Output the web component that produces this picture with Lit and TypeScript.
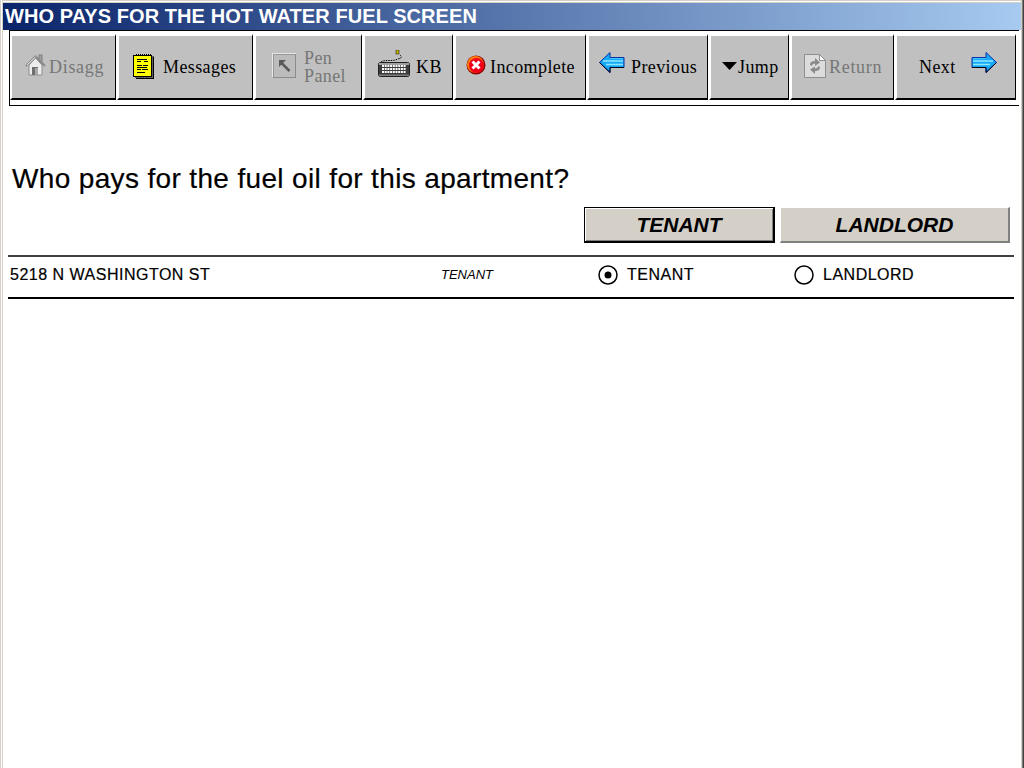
import { LitElement, html, css, svg } from "lit";
import { customElement } from "lit/decorators.js";

const home = svg`<svg class="ic i-home" width="21" height="22" viewBox="0 0 21 22">
  <rect x="14" y="1" width="3" height="7" fill="#a0a0a0" stroke="#808080" stroke-width="1"/>
  <path d="M4 11V21H17V11L10.500 4Z" fill="#ececec" stroke="#8c8c8c"/>
  <path d="M1 12L10.500 2.500L20 12" fill="none" stroke="#8a8a8a" stroke-width="2"/>
  <path d="M2 11L10.500 3" fill="none" stroke="#e8e8e8"/>
  <rect x="7" y="13" width="6" height="8" fill="#6e6e6e"/><rect x="10" y="14" width="3" height="7" fill="#a8a8a8"/>
</svg>`;

const notepad = svg`<svg class="ic i-note" width="22" height="26" viewBox="0 0 22 26" shape-rendering="crispEdges">
  <rect x="2" y="3" width="19" height="22" fill="#606060"/>
  <rect x="0.500" y="2.500" width="18" height="21" fill="#ffff00" stroke="#000"/>
  <path d="M20.500 4V25H3" fill="none" stroke="#000"/>
  <path d="M3 1V3M5 1V3M7 1V3M9 1V3M11 1V3M13 1V3M15 1V3M17 1V3" stroke="#000"/>
  <path d="M4 6.500H14M4 8.500H8M11 8.500H15M4 12.500H9M10 12.500H15M4 14.500H14M4 16.500H8M9 16.500H15M4 19.500H12" stroke="#000"/>
</svg>`;

const penBox = svg`<svg class="ic i-pen" width="24" height="25" viewBox="0 0 24 25" shape-rendering="crispEdges">
  <rect width="24" height="25" fill="#bcbcbc"/>
  <path d="M0.500 24V0.500H23.500" fill="none" stroke="#e6e6e6"/>
  <path d="M1.500 24V1.500H23" fill="none" stroke="#989898"/>
  <path d="M23.500 1V24.500H1" fill="none" stroke="#8c8c8c"/>
  <path d="M17.500 18L9 9.500" stroke="#5a5a5a" stroke-width="2.500" fill="none" shape-rendering="auto"/>
  <path d="M7 7H14L7 14Z" fill="#5a5a5a" shape-rendering="auto"/>
</svg>`;

const keys = [0, 1, 2].flatMap((r) =>
  [0, 1, 2, 3, 4, 5, 6, 7, 8].map(
    (c) => svg`<rect x=${4 + c * 2.700} y=${15 + r * 3} width="2" height="2" fill="#fff"/>`
  )
);
const keyboard = svg`<svg class="ic i-kb" width="32" height="28" viewBox="0 0 32 28">
  <path d="M3 12C8 9 14 12 20 9C24 8 25 6 21 5" fill="none" stroke="#000" stroke-dasharray="1.500 1"/>
  <rect x="18" y="0" width="3" height="4" fill="#c8b400" stroke="#000" stroke-width="0.500"/>
  <rect x="0.500" y="12.500" width="31" height="14" rx="2" fill="#3c3c3c" stroke="#202020"/>
  <rect x="1" y="13" width="30" height="2" fill="#a0a0a0"/>
  <rect x="1" y="24.500" width="30" height="1.500" fill="#7c7c7c"/>
  ${keys}
</svg>`;

const stop = svg`<svg class="ic i-stop" width="20" height="20" viewBox="0 0 20 20">
  <circle cx="10" cy="10" r="9.500" fill="#8c0000"/>
  <circle cx="9.500" cy="9.500" r="8.500" fill="#ff7a10"/>
  <circle cx="10.500" cy="10.500" r="7.500" fill="#f00018"/>
  <path d="M6.500 6.500L13.500 13.500M13.500 6.500L6.500 13.500" stroke="#fff" stroke-width="3"/>
</svg>`;

const arrowBody = svg`
  <path d="M0.500 10.500L11 0.500V5.500H25V15.500H11V20.500Z" fill="#18a8f8" stroke="#0830a8"/>
  <path d="M4 9H24M7 12.500H24" stroke="#8ce8ff" stroke-width="1.300"/>
  <path d="M11 6.500H24" stroke="#40c8ff"/>
  <path d="M0.500 10.500L11 20.500V15.500H25" fill="none" stroke="#000014"/>`;
const arrowL = svg`<svg class="ic i-arrow" width="26" height="21" viewBox="0 0 26 21">${arrowBody}</svg>`;
const arrowR = svg`<svg class="ic i-arrow" width="26" height="21" viewBox="0 0 26 21"><g transform="translate(26 0) scale(-1 1)">${arrowBody}</g></svg>`;

const tri = svg`<svg class="ic i-tri" width="15" height="8" viewBox="0 0 15 8"><path d="M0 0H15L7.500 8Z" fill="#000"/></svg>`;

const ret = svg`<svg class="ic i-ret" width="22" height="24" viewBox="0 0 22 24">
  <path d="M0.500 0.500H15.500L21.500 6.500V23.500H0.500Z" fill="#dcdcdc" stroke="#8e8e8e"/>
  <path d="M15.500 0.500V6.500H21.500Z" fill="#fff" stroke="#8e8e8e"/>
  <path d="M6 11C6 8 8 7 11 7V4L16 8.500L11 12V9.500C9 9.500 8 10.500 8 12Z" fill="#8a8a8a"/>
  <path d="M16 13C16 16 14 17 11 17V20L6 15.500L11 12.500V14.500C13 14.500 14 13.500 14 12Z" fill="#8a8a8a"/>
</svg>`;

@customElement("app-root")
export class AppRoot extends LitElement {
  static styles = css`
    :host { display: block; width: 1024px; height: 768px; overflow: hidden; background: #fff; }
    * { box-sizing: border-box; }
    .win {
      width: 1024px; height: 768px; display: flex; flex-direction: column; background: #fff;
      padding: 3px 3px 0 3px;
      box-shadow:
        inset -1px 0 0 #404040, inset -2px 0 0 #808080, inset -3px 0 0 #d4d0c8,
        inset 1px 0 0 #d4d0c8, inset 2px 0 0 #fff, inset 3px 0 0 #d4d0c8,
        inset 0 1px 0 #d4d0c8, inset 0 2px 0 #fff, inset 0 3px 0 #d4d0c8;
      font-family: "Liberation Sans", Arial, sans-serif; color: #000;
    }
    .title {
      height: 27px; flex: none; padding-left: 2px; display: flex; align-items: center;
      background: linear-gradient(90deg, #0a246a, #a6caf0);
      color: #fff; font-weight: 700; font-size: 20px; letter-spacing: 0.07px; white-space: nowrap;
    }
    .toolbar {
      flex: none; height: 76px; margin: 0 2px 0 6px; padding: 3px 0 0 0;
      border: 1px solid #000; border-right: 0; background: #fff;
      display: grid; align-items: start;
      grid-template-columns: 107px 137px 109px 91px 133px 122px 81px 105px 122px;
    }
    .btn {
      height: 66px; margin-right: 1px; display: flex; align-items: center; background: #c0c0c0;
      border-style: solid; border-width: 2px 1px 2px 2px; border-color: #fff #000 #000 #fff;
      font-family: "Liberation Serif", "Times New Roman", serif; font-size: 18px;
      letter-spacing: 0.4px; white-space: nowrap;
    }
    .off { color: #767676; }
    .ic { flex: none; display: block; }
    .b1 { padding-left: 13px; gap: 3px; letter-spacing: 0.7px; }
    .b2 { padding-left: 14px; gap: 8px; }
    .b3 { padding-left: 16px; gap: 8px; }
    .b4 { padding-left: 13px; gap: 6px; }
    .b5 { padding-left: 10px; gap: 4px; }
    .b6 { padding-left: 10px; gap: 6px; }
    .b7 { padding-left: 11px; gap: 1px; }
    .b8 { padding-left: 12px; gap: 3px; letter-spacing: 0.7px; }
    .b9 { padding-left: 22px; gap: 15px; }
    .i-arrow { margin-top: -10px; }
    .i-kb { margin-top: -7px; }
    .i-note { margin-top: -3px; }
    .i-home { margin-top: -5px; }
    .i-pen { margin-top: -4px; }
    .i-stop { margin-top: -4px; }
    .i-ret { margin-top: -2px; }
    .i-tri { margin-top: -2px; }
    .stack { display: flex; flex-direction: column; line-height: 18px; }
    .content { flex: 1; padding: 0 7px 0 5px; }
    .q { margin: 58px 0 0 4px; font-size: 28px; letter-spacing: 0.35px; line-height: 30px; white-space: nowrap; -webkit-text-stroke: 0.2px #000; }
    .answers { display: flex; margin: 13px 0 0 576px; gap: 5px; }
    .ans {
      height: 36px; display: flex; align-items: center; justify-content: center;
      background: #d4d0c8; font-weight: 700; font-style: italic; font-size: 21px;
      border-style: solid; border-width: 1px 2px 2px 1px;
      border-color: #fff #808080 #808080 #fff;
    }
    .a1 { width: 191px; border-color: #000; box-shadow: inset 1px 1px 0 #fff, inset -1px -1px 0 #808080; }
    .a2 { width: 230px; }
    .row {
      margin-top: 12px; height: 44px; padding: 0 0 5px 2px;
      border-top: 2px solid #404040; border-bottom: 2px solid #000;
      display: grid; grid-template-columns: 431px 157px 196px 1fr; align-items: center;
      font-size: 16px; letter-spacing: 0.5px; -webkit-text-stroke: 0.2px #000;
    }
    .val { font-style: italic; font-size: 13px; letter-spacing: 0; -webkit-text-stroke: 0; }
    .opt { display: flex; align-items: center; gap: 9px; }
    .radio { width: 20px; height: 20px; flex: none; display: block; }
  `;

  render() {
    return html`<div class="win">
      <div class="title">WHO PAYS FOR THE HOT WATER FUEL SCREEN</div>
      <div class="toolbar">
        <div class="btn b1 off">${home}<span>Disagg</span></div>
        <div class="btn b2">${notepad}<span>Messages</span></div>
        <div class="btn b3 off">${penBox}<span class="stack"><span>Pen</span><span>Panel</span></span></div>
        <div class="btn b4">${keyboard}<span>KB</span></div>
        <div class="btn b5">${stop}<span>Incomplete</span></div>
        <div class="btn b6">${arrowL}<span>Previous</span></div>
        <div class="btn b7">${tri}<span>Jump</span></div>
        <div class="btn b8 off">${ret}<span>Return</span></div>
        <div class="btn b9"><span>Next</span>${arrowR}</div>
      </div>
      <div class="content">
        <div class="q">Who pays for the fuel oil for this apartment?</div>
        <div class="answers">
          <div class="ans a1">TENANT</div>
          <div class="ans a2">LANDLORD</div>
        </div>
        <div class="row">
          <span>5218 N WASHINGTON ST</span>
          <span class="val">TENANT</span>
          <span class="opt">
            <svg class="radio" viewBox="0 0 20 20"><circle cx="10" cy="10" r="9" fill="#fff" stroke="#000" stroke-width="1.500"/><circle cx="10" cy="10" r="3.500" fill="#000"/></svg>
            <span>TENANT</span>
          </span>
          <span class="opt">
            <svg class="radio" viewBox="0 0 20 20"><circle cx="10" cy="10" r="9" fill="#fff" stroke="#000" stroke-width="1.500"/></svg>
            <span>LANDLORD</span>
          </span>
        </div>
      </div>
    </div>`;
  }
}
